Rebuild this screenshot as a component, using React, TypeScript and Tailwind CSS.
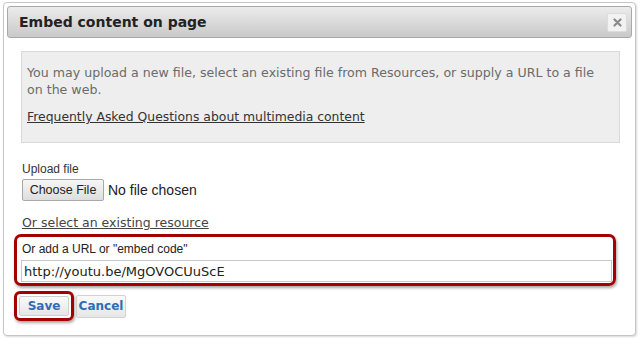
import React from 'react';

const verdana = { fontFamily: '"DejaVu Sans", Verdana, sans-serif' };
const arial = { fontFamily: '"Liberation Sans", Arial, sans-serif' };

const App: React.FC = () => {
  return (
    <div className="w-[640px] h-[339px] bg-white pt-[2px] pl-[3px] overflow-hidden">
      <div className="w-[633px] h-[334px] bg-white border border-[#c6c6c6] rounded-[4px] shadow-[1px_1px_2px_rgba(0,0,0,0.15)] p-[3px]">
        {/* title bar */}
        <div className="h-[32px] flex items-center justify-between pl-[11px] pr-[4px] rounded-[3px] border border-[#a9a9a9] bg-gradient-to-b from-[#ececec] to-[#c9c9c9]">
          <h1
            className="text-[14px] font-bold text-[#222]"
            style={{ fontFamily: '"DejaVu Sans", Tahoma, sans-serif' }}
          >
            Embed content on page
          </h1>
          <button className="w-[20px] h-[19px] flex items-center justify-center rounded-[2px] bg-[#f2f2f2] border border-[#dcdcdc]">
            <svg width="9" height="9" viewBox="0 0 9 9">
              <path d="M1.5 1.5 L7.5 7.5 M7.5 1.5 L1.5 7.5" stroke="#8a8a8a" strokeWidth="2.2" strokeLinecap="round" />
            </svg>
          </button>
        </div>

        <div className="pl-[14px] pr-[12px] pt-[13px]">
          {/* info box */}
          <div
            className="h-[92px] bg-[#eeeeee] border border-[#d9d9d9] pl-[5px] pr-[6px] pt-[12px] text-[#6b6b6b] leading-[17px] whitespace-nowrap"
            style={verdana}
          >
            <p className="text-[12.6px]">
              You may upload a new file, select an existing file from Resources, or supply a URL to a file
              <br />
              on the web.
            </p>
            <a href="#" className="block mt-[10px] text-[12.4px] text-[#333] underline">
              Frequently Asked Questions about multimedia content
            </a>
          </div>

          {/* upload */}
          <div className="mt-[19px] pl-[1px]" style={arial}>
            <div className="text-[12px] text-[#333] leading-[15px]">Upload file</div>
            <div className="flex items-center mt-[2px]">
              <button className="h-[22px] w-[82px] rounded-[2px] border border-[#a8a8a8] bg-gradient-to-b from-[#f6f6f6] to-[#dedede] text-[12.5px] text-[#222]">
                Choose File
              </button>
              <span className="ml-[4px] text-[14px] text-[#222]">No file chosen</span>
            </div>
          </div>

          <a
            href="#"
            className="block mt-[14px] pl-[1px] text-[12.5px] text-[#444] underline leading-[15px]"
            style={verdana}
          >
            Or select an existing resource
          </a>

          {/* url */}
          <div className="mt-[4px] -ml-[7px] w-[602px] border-[3px] border-[#a50000] rounded-[7px] shadow-[1px_2px_3px_rgba(0,0,0,0.35)] pl-[4px] pr-[1px] pt-[5px] pb-[1px]">
            <label className="block text-[12px] text-[#222] leading-[15px] pl-[1px]" style={arial}>
              Or add a URL or "embed code"
            </label>
            <input
              type="text"
              defaultValue="http://youtu.be/MgOVOCUuScE"
              className="mt-[3px] block w-full h-[22px] border border-[#c8c8c8] px-[2px] text-[13px] text-[#222] outline-none"
              style={verdana}
            />
          </div>

          {/* buttons */}
          <div className="flex items-center mt-[5px] -ml-[7px]">
            <div className="flex border-[3px] border-[#a50000] rounded-[6px] shadow-[1px_2px_3px_rgba(0,0,0,0.35)] p-[2px]">
              <button
                className="h-[20px] w-[50px] rounded-[2px] border border-[#cfcfcf] bg-gradient-to-b from-[#fafafa] to-[#e6e6e6] text-[12px] font-bold text-[#2d6db5] leading-none"
                style={{ fontFamily: '"DejaVu Sans", Tahoma, sans-serif' }}
              >
                Save
              </button>
            </div>
            <button
              className="ml-[2px] h-[23px] w-[50px] rounded-[2px] border border-[#d2d2d2] bg-gradient-to-b from-[#fafafa] to-[#e6e6e6] text-[12px] font-bold text-[#2d6db5] leading-none"
              style={{ fontFamily: '"DejaVu Sans", Tahoma, sans-serif' }}
            >
              Cancel
            </button>
          </div>
        </div>
      </div>
    </div>
  );
};

export default App;
